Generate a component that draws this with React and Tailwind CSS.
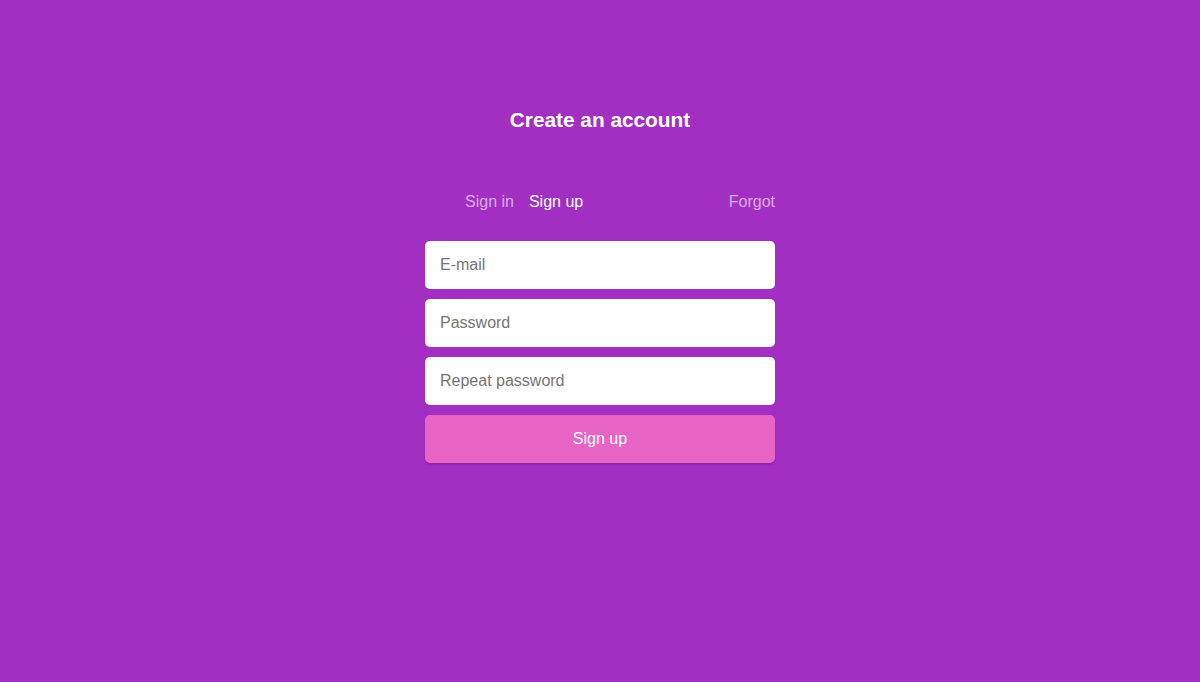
import React from 'react';

const App = () => {
    return (
        <div
            className="min-h-screen w-full bg-[#a22fc2] flex flex-col items-center text-white"
            style={{ fontFamily: '"Liberation Sans", Arial, sans-serif' }}
        >
            <h1 className="mt-[106px] text-[20.8px] font-bold leading-[28px]">Create an account</h1>

            <div className="mt-[56px] w-[350px]">
                {/* Tabs */}
                <div className="flex items-center pl-[40px] h-[24px] text-[16px]">
                    <span className="text-white/60">Sign in</span>
                    <span className="ml-[15px] text-white">Sign up</span>
                    <span className="ml-auto text-white/60">Forgot</span>
                </div>

                <form className="mt-[27px] flex flex-col gap-[10px]" onSubmit={(e) => e.preventDefault()}>
                    <input
                        type="email"
                        placeholder="E-mail"
                        className="h-[48px] w-full rounded-[5px] bg-white px-[15px] text-[16px] text-gray-800 placeholder:text-[#757575] outline-none"
                    />
                    <input
                        type="password"
                        placeholder="Password"
                        className="h-[48px] w-full rounded-[5px] bg-white px-[15px] text-[16px] text-gray-800 placeholder:text-[#757575] outline-none"
                    />
                    <input
                        type="password"
                        placeholder="Repeat password"
                        className="h-[48px] w-full rounded-[5px] bg-white px-[15px] text-[16px] text-gray-800 placeholder:text-[#757575] outline-none"
                    />
                    <button
                        type="submit"
                        className="h-[48px] w-full rounded-[5px] bg-[#e864c4] text-[16px] text-white shadow-[0_2px_2px_rgba(0,0,0,0.15)]"
                    >
                        Sign up
                    </button>
                </form>
            </div>
        </div>
    );
};

export default App;
